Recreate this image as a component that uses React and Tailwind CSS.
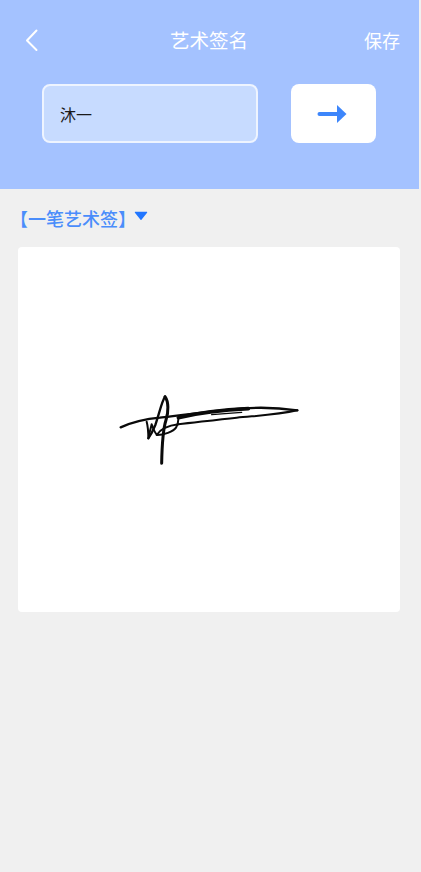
const font = { fontFamily: '"Noto Sans CJK SC", sans-serif' };

function Signature() {
  return (
    <svg viewBox="0 0 600 270" className="h-[90px] w-[200px]" fill="none" stroke="#0a0a0a" strokeLinecap="round" strokeLinejoin="round">
      <path d="M32 127C70 110 105 102 150 98C230 88 320 76 400 70C460 66 520 70 562 76" strokeWidth="7" />
      <path d="M205 98C280 80 350 74 415 71" strokeWidth="11" />
      <path d="M562 76C500 90 440 92 380 98C320 104 260 112 205 118" strokeWidth="6" />
      <path d="M305 89C340 86 370 84 395 82" strokeWidth="4" />
      <path d="M165 35C155 50 148 85 136 120C130 135 122 150 115 160" strokeWidth="7" />
      <path d="M165 35C176 50 176 80 168 105C160 130 156 180 155 235" strokeWidth="9" />
      <path d="M110 110C114 125 115 145 115 160C118 145 122 130 125 118C130 130 134 145 142 150C160 150 190 140 198 128C204 118 205 108 205 103" strokeWidth="6" />
      <path d="M140 150C150 135 170 122 205 118" strokeWidth="6" />
    </svg>
  );
}

export default function App() {
  return (
    <div className="h-[872px] w-[421px] overflow-hidden bg-[#f0f0f0]" style={font}>
      <header className="h-[189px] w-[419px] bg-[#a4c2ff] pt-[16px]">
        <div className="relative flex h-[48px] items-center justify-between pl-[22px] pr-[19px]">
          <svg width="20" height="24" viewBox="0 0 20 24" fill="none" stroke="white" strokeWidth="2" strokeLinecap="round" strokeLinejoin="round">
            <path d="M14.500 2.500L5 12.500L14.500 22" />
          </svg>
          <h1 className="absolute inset-x-0 pr-[1px] text-center text-[19.500px] leading-[48px] text-white">艺术签名</h1>
          <span className="text-[18px] leading-[48px] text-white">保存</span>
        </div>
        <div className="mt-[20px] flex pl-[42px]">
          <div className="flex h-[59px] w-[216px] items-center rounded-[8px] border-2 border-white/70 bg-[#c7dbff] pl-[16px] text-[16px] text-[#1a1a1a]">沐一</div>
          <button className="ml-[33px] flex h-[59px] w-[85px] items-center justify-center rounded-[8px] bg-white">
            <svg width="30" height="20" viewBox="0 0 30 20" fill="#3d86fb" className="mr-[3px]">
              <rect x="0.500" y="8" width="22" height="4" rx="2" />
              <path d="M20 1L29.500 10L20 19Z" />
            </svg>
          </button>
        </div>
      </header>

      <div className="flex h-[58px] items-center pb-[1px] pl-[10px] text-[#4a8dfb]">
        <span className="text-[18px] font-medium leading-[24px]">【一笔艺术签】</span>
        <svg className="ml-[-2px] mb-[3px]" width="14" height="10" viewBox="0 0 15 10" fill="#2176ff">
          <path d="M1 1.500C.6 1 1 .5 1.500.5H13.500C14 .5 14.400 1 14 1.500L8 9C7.700 9.400 7.300 9.400 7 9Z" />
        </svg>
      </div>

      <main className="ml-[18px] h-[365px] w-[382px] rounded-[4px] bg-white pl-[92px] pt-[138px]">
        <Signature />
      </main>
    </div>
  );
}
